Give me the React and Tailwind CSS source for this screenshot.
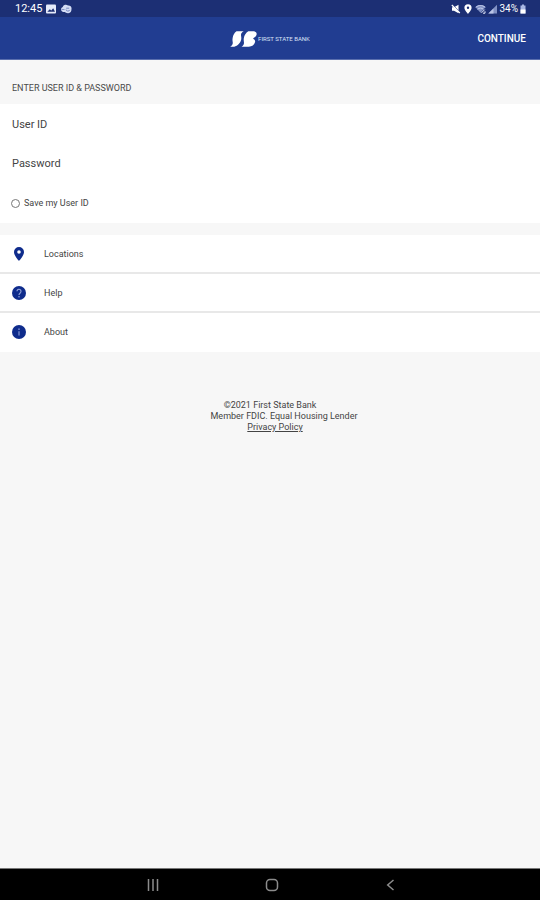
import React, { useState } from "react";

const StatusBar = () => (
  <div className="flex h-[17px] items-center justify-between bg-[#1c2f74] pr-[14px] pl-[15px] text-white">
    <div className="flex items-center gap-1">
      <span className="text-[11px] leading-4">12:45</span>
      {/* Gallery */}
      <svg viewBox="0 0 10 10" className="h-[10px] w-[10px]">
        <rect x="0" y="0.5" width="10" height="9" rx="1" fill="#e6ebfa" />
        <path d="M1.300 7.800 3.800 5.200l1.500 1.400 1.900-2.400L9 7.800z" fill="#1c2f74" />
      </svg>
      {/* Cloud sync */}
      <svg viewBox="0 0 12 10" className="h-[10px] w-[12px]">
        <path d="M3 8a2.600 2.600 0 0 1-.3-5A3.300 3.300 0 0 1 8 1.500 3 3 0 0 1 11.500 5c0 2.400-1 4-3.200 4.200C6.500 9.300 5.500 8.700 5 8z" fill="#d3dcf5" />
        <path d="M6 5.500a2 2 0 0 0 3.800.4M6.200 4.200h3" fill="none" stroke="#5f74b4" strokeWidth="0.800" />
        <path d="M1.500 5.500h3" stroke="#6f80b8" strokeWidth="0.800" />
      </svg>
    </div>

    <div className="flex items-center gap-[2px]">
      {/* Muted */}
      <svg viewBox="0 0 10 10" className="h-[10px] w-[10px]">
        <path d="M1 3.300h2L7.500.8v8.400L3 6.700H1z" fill="#fff" />
        <path d="M1.200.2l8.300 8.300" stroke="#1c2f74" strokeWidth="0.700" />
        <path d="M.8 1l8 8" stroke="#fff" strokeWidth="1.200" />
      </svg>
      {/* Location */}
      <svg viewBox="0 0 10 10" className="h-[10px] w-[10px]">
        <path fillRule="evenodd" d="M5 .2a3.600 3.600 0 0 1 3.600 3.600C8.600 6.300 5 9.900 5 9.900S1.400 6.300 1.400 3.800A3.600 3.600 0 0 1 5 .2zm0 2.400a1.200 1.200 0 1 0 0 2.400 1.200 1.200 0 0 0 0-2.400z" fill="#fff" />
      </svg>
      {/* Wifi */}
      <svg viewBox="0 0 11 10" className="h-[10px] w-[11px]">
        <path d="M.3 3C3.200.3 7.800.3 10.700 3L5.500 8.800z" fill="#8191c4" />
        <path d="M.8 3.300c2.600-2.400 6.700-2.400 9.400 0M2.500 5.300c1.700-1.600 4.200-1.600 5.900 0" fill="none" stroke="#c3cdec" strokeWidth="1" />
        <path d="M6.500 8.800l3.200-3.200M8 9.200h2V7.300" fill="none" stroke="#e6ebfa" strokeWidth="1" />
      </svg>
      {/* Signal */}
      <svg viewBox="0 0 9 10" className="h-[10px] w-[9px]">
        <path d="M9 .8v8.700H.3z" fill="#8191c4" />
        <path d="M5.500 4.400v5.100H.3z" fill="#b9c4e6" />
      </svg>
      <span className="text-[10px] leading-4">34%</span>
      {/* Battery */}
      <svg viewBox="0 0 6 10" className="h-[10px] w-[6px]">
        <path d="M2 .5h2v1h1.500v8h-5v-8H2z" fill="#a9b8e4" />
        <path d="M.5 5.500h5v4h-5z" fill="#fff" />
      </svg>
    </div>
  </div>
);

const Header = () => (
  <header className="grid h-[43px] grid-cols-[1fr_auto_1fr] items-center border-b border-[#5a6fae] bg-[#213d91] px-[14px] pt-px text-white">
    <div />
    <div className="flex items-center gap-px">
      {/* Logo mark: two slanted ribbons, the second one notched at its waist */}
      <svg viewBox="0 0 27 16" className="h-4 w-[27px]" fill="#fff">
        <path d="M6.500.3h7.200C11.800 1.200 11 2.500 11 4c0 1.500.6 2.600.2 4.600-.7 3.400-3.500 6.300-7 7.100H.2c1.600-.9 2.600-2.200 2.600-3.900C2.700 10.200 2.300 9 2.600 7.200 3 4.400 4.300 1.800 6.500.3z" />
        <path d="M18.300.3h4.500c2.700 0 4.200 1.200 3.800 3.200-.3 1.500-1.300 2.700-3 3.500-.5.300-.5.700-.1 1 1.400.7 1.900 1.800 1.500 3.300-.7 2.700-3 4.400-6.200 4.400h-7.300c1.700-.9 2.500-2.200 2.500-3.900-.1-1.600-.5-2.800-.2-4.600.5-2.800 2.100-5.400 4.500-6.900z" />
      </svg>
      <span className="text-[6px] leading-[8px] whitespace-nowrap text-[#dbe2f6]">FIRST STATE BANK</span>
    </div>
    <button type="submit" form="login" className="cursor-pointer justify-self-end text-[10px] leading-4 font-medium">
      CONTINUE
    </button>
  </header>
);

const LoginForm = () => {
  const [saveId, setSaveId] = useState(false);

  return (
    <form id="login" onSubmit={(e) => e.preventDefault()}>
      <h1 className="px-3 pt-5 pb-2 text-[9px] leading-4 text-[#4a4a4a]">ENTER USER ID &amp; PASSWORD</h1>
      <div className="bg-white">
        <input
          type="text"
          aria-label="User ID"
          placeholder="User ID"
          className="block h-10 w-full px-3 text-[11px] text-[#333] outline-none placeholder:text-[#444]"
        />
        <input
          type="password"
          aria-label="Password"
          placeholder="Password"
          className="block h-[38px] w-full px-3 text-[11px] text-[#333] outline-none placeholder:text-[#444]"
        />
        <label className="flex h-[41px] items-center gap-1 px-[11px] pt-px text-[9px] leading-4 text-[#444]">
          <input
            type="checkbox"
            checked={saveId}
            onChange={(e) => setSaveId(e.target.checked)}
            className="h-[9px] w-[9px] appearance-none rounded-full border border-[#777] checked:bg-[#0f2c8c]"
          />
          Save my User ID
        </label>
      </div>
    </form>
  );
};

const PinIcon = () => (
  <svg viewBox="0 0 14 14" className="h-[14px] w-[14px]">
    <path fillRule="evenodd" d="M7 0a5 5 0 0 1 5 5C12 8.600 7 14 7 14S2 8.600 2 5A5 5 0 0 1 7 0zm0 3.200a1.800 1.800 0 1 0 0 3.600 1.800 1.800 0 0 0 0-3.600z" fill="#0f2c8c" />
  </svg>
);

const HelpIcon = () => (
  <svg viewBox="0 0 14 14" className="h-[14px] w-[14px]">
    <circle cx="7" cy="7" r="7" fill="#0f2c8c" />
    <path d="M5 5.300a2 2 0 1 1 3.200 1.600C7.400 7.500 7 7.900 7 8.900" fill="none" stroke="#8f9fd6" strokeWidth="1.200" />
    <circle cx="7" cy="10.700" r="0.800" fill="#8f9fd6" />
  </svg>
);

const AboutIcon = () => (
  <svg viewBox="0 0 14 14" className="h-[14px] w-[14px]">
    <circle cx="7" cy="7" r="7" fill="#0f2c8c" />
    <path d="M7 6.200v4.300" stroke="#7083c6" strokeWidth="1.500" />
    <circle cx="7" cy="4.200" r="0.900" fill="#7083c6" />
  </svg>
);

const links = [
  { label: "Locations", Icon: PinIcon },
  { label: "Help", Icon: HelpIcon },
  { label: "About", Icon: AboutIcon },
];

const LinkList = () => (
  <nav className="mt-3 bg-white">
    {links.map(({ label, Icon }) => (
      <a
        key={label}
        href="#"
        className="flex h-[39px] items-center gap-[18px] border-b-2 border-[#e8e8e8] px-3 text-[9px] leading-4 text-[#444] last:border-transparent"
      >
        <Icon />
        {label}
      </a>
    ))}
  </nav>
);

const Footer = () => (
  <footer className="mt-12 text-center text-[9px] leading-[11px] text-[#444]">
    <p>©2021 First State Bank</p>
    <p className="pl-7">Member FDIC. Equal Housing Lender</p>
    <p className="pl-2.5">
      <a href="#" className="underline">Privacy Policy</a>
    </p>
  </footer>
);

const NavBar = () => (
  <div className="mt-auto grid h-8 grid-cols-3 border-t border-[#777] bg-black pr-[90px] pl-[94px] pt-px text-[#8c8c8c]">
    <button type="button" aria-label="Recent apps" className="flex items-center justify-center">
      <svg viewBox="0 0 12 12" className="h-3 w-3" stroke="currentColor" strokeWidth="1.500">
        <path d="M1.500 0v12M6 0v12M10.500 0v12" />
      </svg>
    </button>
    <button type="button" aria-label="Home" className="flex items-center justify-center">
      <svg viewBox="0 0 14 14" className="h-[14px] w-[14px]" fill="none" stroke="currentColor" strokeWidth="1.500">
        <rect x="1.500" y="1.500" width="11" height="11" rx="3.500" />
      </svg>
    </button>
    <button type="button" aria-label="Back" className="flex items-center justify-center">
      <svg viewBox="0 0 12 12" className="h-3 w-3" fill="none" stroke="currentColor" strokeWidth="1.500">
        <path d="M8.500 1 2.700 6l5.800 5" />
      </svg>
    </button>
  </div>
);

const App = () => (
  <div className="flex min-h-screen flex-col bg-[#f7f7f7] font-['Roboto',sans-serif]">
    <StatusBar />
    <Header />
    <main>
      <LoginForm />
      <LinkList />
    </main>
    <Footer />
    <NavBar />
  </div>
);

export default App;
